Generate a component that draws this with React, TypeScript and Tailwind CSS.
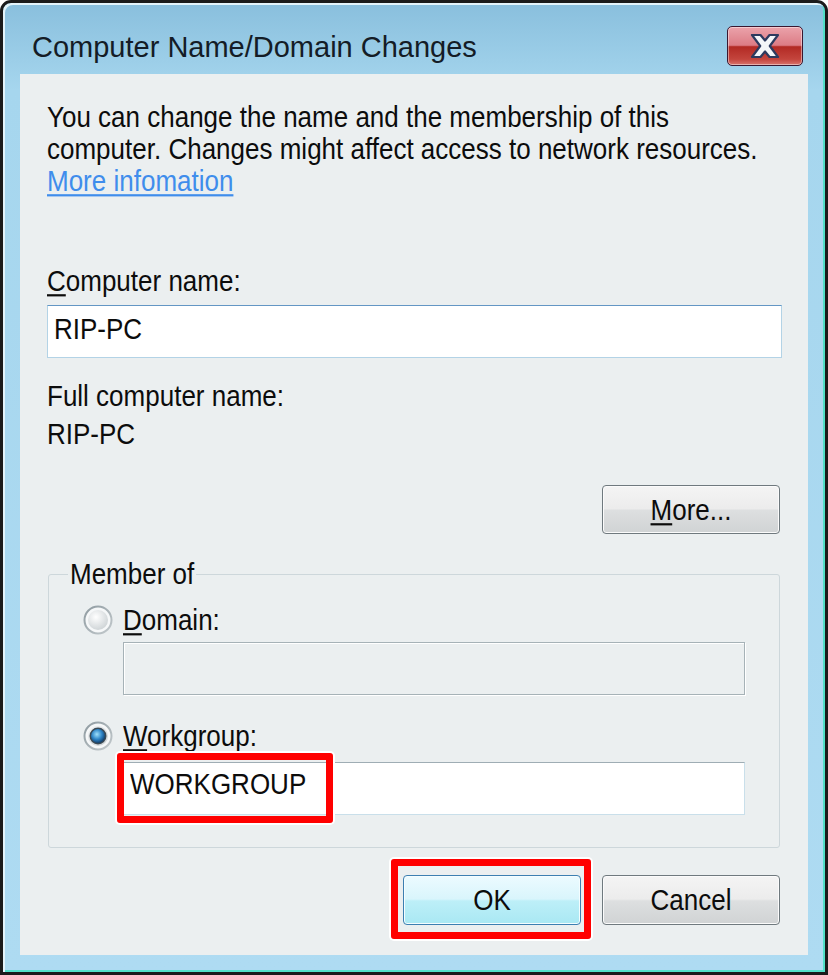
import React from 'react';

function T({ children }: { children: React.ReactNode }) {
  return <span className="inline-block scale-y-[1.1]">{children}</span>;
}

function U({ children }: { children: React.ReactNode }) {
  return <span className="underline decoration-2 underline-offset-[3px]">{children}</span>;
}

function Radio({ checked }: { checked?: boolean }) {
  return (
    <svg width="30" height="30" viewBox="0 0 30 30">
      <defs>
        <linearGradient id="ring" x1="0" y1="0" x2="1" y2="1">
          <stop offset="0" stopColor="#8e9aa0" />
          <stop offset="1" stopColor="#c3cacd" />
        </linearGradient>
        <radialGradient id="inner" cx="0.4" cy="0.35" r="0.75">
          <stop offset="0" stopColor="#ffffff" />
          <stop offset="1" stopColor="#c9cfd2" />
        </radialGradient>
        <radialGradient id="dot" cx="0.42" cy="0.38" r="0.65">
          <stop offset="0" stopColor="#9fe0fb" />
          <stop offset="0.55" stopColor="#2f86c8" />
          <stop offset="1" stopColor="#0f3a66" />
        </radialGradient>
      </defs>
      <circle cx="15" cy="15" r="13.5" fill="#f6f8f9" stroke="url(#ring)" strokeWidth="2" />
      <circle cx="15" cy="15" r="10" fill="url(#inner)" />
      {checked && <circle cx="15" cy="15" r="8.5" fill="#3b4a55" />}
      {checked && <circle cx="15" cy="15" r="7" fill="url(#dot)" />}
    </svg>
  );
}

const line = 'h-[32px] leading-[32px] text-[26px] whitespace-nowrap';
const grayBtn =
  'w-[178px] rounded-[4px] border border-[#6f797e] bg-[linear-gradient(to_bottom,#f4f4f4_0%,#ececec_48%,#dddfe0_52%,#d0d3d4_100%)] shadow-[inset_0_0_0_1px_#fbfbfb] flex items-center justify-center';

export default function App() {
  return (
    <div className="w-[828px] h-[975px] bg-white font-['Liberation_Sans',Arial,sans-serif] text-[#0c0c0c]">
      <div className="w-full h-full flex flex-col rounded-t-[11px] border-[3px] border-[#1b1b1b] bg-[linear-gradient(to_bottom,#89bfdd_0%,#a6d6ee_9%,#aedbf2_100%)] shadow-[inset_2px_2px_0_#e3f4fb,inset_-2px_-2px_0_#52e0c8] px-[17px] pb-[17px]">
        {/* title bar */}
        <div className="h-[71px] flex items-start justify-between">
          <div className="mt-[28px] ml-[12px] h-[32px] leading-[32px] text-[29px] text-[#141c26] whitespace-nowrap">
            Computer Name/Domain Changes
          </div>
          <div className="mt-[23px] mr-[5px] w-[76px] h-[40px] rounded-[5px] border border-[#3a1730] bg-[linear-gradient(to_bottom,#eba3ab_0%,#dc7c85_48%,#b22a24_52%,#c4453d_85%,#d8746d_100%)] shadow-[inset_0_0_0_1px_rgba(255,255,255,0.45)] flex items-center justify-center">
            <svg width="30" height="26" viewBox="0 0 30 26">
              <path
                d="M2 2 H10.5 L15 7.5 L19.5 2 H28 L19.8 13 L28 24 H19.5 L15 18.5 L10.5 24 H2 L10.2 13 Z"
                fill="#f4f6f8"
                stroke="#2d3a5e"
                strokeWidth="2.2"
                strokeLinejoin="round"
              />
            </svg>
          </div>
        </div>

        {/* content */}
        <div className="flex-1 bg-[#ebeff0] pl-[27px] pr-[26px] pt-[27px] flex flex-col">
          <div className={line}><T>You can change the name and the membership of this</T></div>
          <div className={line}><T>computer. Changes might affect access to network resources.</T></div>
          <div className={line + ' text-[#3f8dec]'}>
            <T><span className="underline decoration-2 underline-offset-[3px]">More infomation</span></T>
          </div>

          <div className={line + ' mt-[68px]'}><T><U>C</U>omputer name:</T></div>
          <div className="mt-[8px] h-[53px] bg-white border border-[#b3d3e6] border-t-[#6396c4] pl-[6px] pb-[6px] flex items-center">
            <div className={line}><T>RIP-PC</T></div>
          </div>

          <div className={line + ' mt-[22px]'}><T>Full computer name:</T></div>
          <div className={line + ' mt-[6px]'}><T>RIP-PC</T></div>

          <div className={grayBtn + ' self-end mr-[2px] mt-[35px] h-[49px]'}>
            <div className={line}><T><U>M</U>ore...</T></div>
          </div>

          <fieldset className="mt-[24px] ml-[1px] mr-[2px] border border-[#cdd7db] rounded-[3px] pb-[32px]">
            <legend className={line + ' ml-[19px] px-[2px]'}><T>Member of</T></legend>

            <div className="mt-[14px] h-[32px] flex items-center">
              <div className="ml-[34px]"><Radio /></div>
              <div className={line + ' ml-[10px]'}><T><U>D</U>omain:</T></div>
            </div>
            <div className="mt-[6px] ml-[74px] mr-[34px] h-[53px] border border-[#a6b2b7] shadow-[inset_1px_1px_0_#ffffff,1px_1px_0_#ffffff] bg-[#ebeff0]" />

            <div className="mt-[25px] h-[32px] flex items-center">
              <div className="ml-[34px]"><Radio checked /></div>
              <div className={line + ' ml-[10px]'}><T><U>W</U>orkgroup:</T></div>
            </div>
            <div className="relative mt-[10px] ml-[74px] mr-[34px] h-[53px] bg-white border border-[#c9dfea] border-t-[#9fadb4] pl-[6px] pb-[10px] flex items-center">
              <div className={line}><T>WORKGROUP</T></div>
              <div className="absolute left-[-7px] top-[-10px] w-[216px] h-[70px] border-[7px] border-[#ff0000] rounded-[3px] shadow-[0_0_0_2px_#ffffff]" />
            </div>
          </fieldset>

          <div className="mt-[27px] mr-[2px] flex justify-end gap-[21px]">
            <div className="relative">
              <div className="w-[178px] h-[50px] rounded-[4px] border border-[#3c7fb1] bg-[linear-gradient(to_bottom,#ecfbff_0%,#d9f5fc_48%,#bdeff8_52%,#a9e8f3_100%)] shadow-[inset_0_0_0_1px_#f4fdff] flex items-center justify-center">
                <div className={line}><T>OK</T></div>
              </div>
              <div className="absolute left-[-12px] top-[-16px] right-[-10px] bottom-[-14px] border-[7px] border-[#ff0000] rounded-[3px] shadow-[0_0_0_2px_#ffffff]" />
            </div>
            <div className={grayBtn + ' h-[50px]'}>
              <div className={line}><T>Cancel</T></div>
            </div>
          </div>
        </div>
      </div>
    </div>
  );
}
